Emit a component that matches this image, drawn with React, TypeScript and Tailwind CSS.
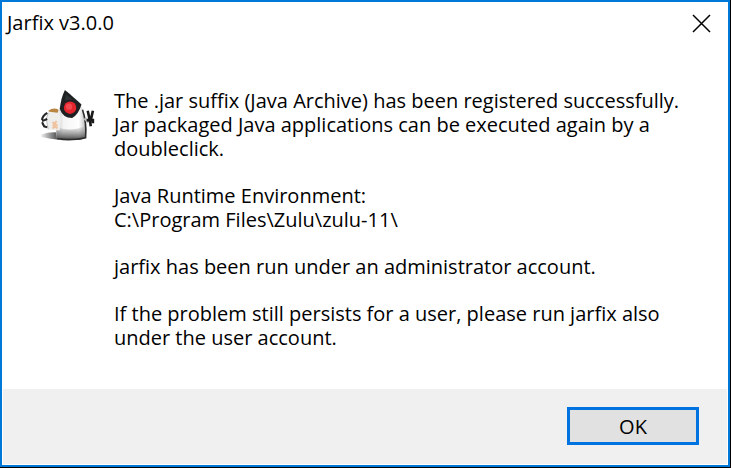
function DukeIcon() {
  return (
    <svg className="h-14 w-14 shrink-0" viewBox="0 0 54 54" role="img" aria-label="Java Duke">
      <defs>
        <linearGradient id="body" x1="0" y1="0" x2="1" y2="0">
          <stop offset="0" stopColor="#c4c4c4" />
          <stop offset="0.25" stopColor="#f4f4f4" />
          <stop offset="0.75" stopColor="#ffffff" />
          <stop offset="1" stopColor="#b4b4b4" />
        </linearGradient>
        <linearGradient id="foot" x1="0" y1="0" x2="0" y2="1">
          <stop offset="0" stopColor="#777777" stopOpacity="0" />
          <stop offset="1" stopColor="#3a3a3a" stopOpacity="0.95" />
        </linearGradient>
        <linearGradient id="shade" x1="0" y1="0" x2="1" y2="0">
          <stop offset="0" stopColor="#eeeeee" />
          <stop offset="1" stopColor="#444444" />
        </linearGradient>
      </defs>
      <path d="M1 44 Q9 41 18 42 L18 49 Q8 48 1 46Z" fill="url(#shade)" />
      <path d="M20 17 C15 26 15 38 16 47 Q20 49 29 49 Q40 50 44 47 C46 36 44 23 40 17Z" fill="url(#body)" />
      <path d="M16 37 Q30 42 45 35 L44 47 Q40 50 29 49 Q20 49 16 47Z" fill="url(#foot)" />
      <path d="M41 20 Q45 32 44 47 Q30 50 17 48" fill="none" stroke="#2c2c2c" strokeWidth="1.5" />
      <path d="M43 28 L47 32" fill="none" stroke="#bbbbbb" strokeWidth="3" />
      <path d="M46 21 L48 30 M51 21 L49 30 M45 30 L51 30 L51 33 M48 30 L49 36" fill="none" stroke="#1a1a1a" strokeWidth="2.5" />
      <path d="M24 1 C21 7 20 13 19 19 Q22 28 31 28 Q37 25 40 15 C36 11 30 6 24 1Z" fill="#1e2022" />
      <path d="M25 5 L24 11 L31 10Z" fill="#303336" />
      <circle cx="29" cy="18" r="6" fill="#e3262e" />
      <circle cx="28" cy="17" r="3" fill="#f2484f" />
      <path d="M8 21 L19 21 L20 30 L19 40 L8 39 L6 29Z" fill="#eeeeec" />
      <path d="M8 23 L6 29 L8 39" fill="none" stroke="#c4c4c4" />
      <path d="M8 21 Q13 17 18 20 L17 23 L9 22Z" fill="#b98543" />
      <path d="M12 32 L16 35 L12 38 M16 31 L13 35 L17 38" fill="none" stroke="#f0c4a0" strokeWidth="2" />
      <path d="M7 23 Q2 26 2 30 M7 29 L2 31 M2 32 L4 36 L7 37" fill="none" stroke="#272727" strokeWidth="2" />
    </svg>
  );
}

export default function App() {
  return (
    <div className="flex min-h-screen flex-col bg-black pr-px pb-px font-['Open_Sans','Noto_Sans',sans-serif] text-black">
      <main
        role="alertdialog"
        aria-labelledby="title"
        aria-describedby="message"
        className="flex grow flex-col border-2 border-[#0078d7] bg-white"
      >
        <header className="flex items-start justify-between pl-[5px] pr-[9px]">
          <h1 id="title" className="pt-2 text-[20px] leading-[26px]">Jarfix v3.0.0</h1>
          <button type="button" aria-label="Close" className="p-2 pt-3">
            <svg className="h-[19px] w-[19px]" viewBox="0 0 19 19" fill="none" stroke="#000" strokeWidth="1.5" aria-hidden="true">
              <path d="M1 1 L18 18 M18 1 L1 18" />
            </svg>
          </button>
        </header>
        <section className="flex grow items-start gap-[18px] pt-12 pr-10 pb-6 pl-[38px]">
          <DukeIcon />
          <div id="message" className="flex flex-col gap-[23px] whitespace-nowrap text-[20px] leading-6">
            <p>
              The .jar suffix (Java Archive) has been registered successfully.
              <br />
              Jar packaged Java applications can be executed again by a
              <br />
              doubleclick.
            </p>
            <p>
              Java Runtime Environment:
              <br />
              C:\Program Files\Zulu\zulu-11\
            </p>
            <p>jarfix has been run under an administrator account.</p>
            <p>
              If the problem still persists for a user, please run jarfix also
              <br />
              under the user account.
            </p>
          </div>
        </section>
        <footer className="mx-px mb-px flex justify-end bg-[#f0f0f0] pt-[18px] pr-7 pb-[19px]">
          <button type="button" className="h-[38px] w-[132px] border-[3px] border-[#0073e0] bg-[#e1e1e1] pt-0.5 text-[20px] leading-6">
            OK
          </button>
        </footer>
      </main>
    </div>
  );
}
